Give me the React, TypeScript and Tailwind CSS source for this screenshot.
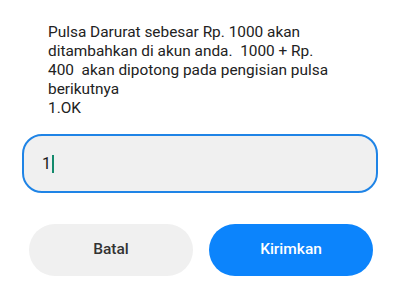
export default function App() {
    return (
        <div className="w-[400px] h-[298px] bg-white overflow-hidden" style={{ fontFamily: 'Roboto, "Noto Sans", sans-serif' }}>
            {/* Message */}
            <p className="pl-[48px] pr-2 pt-[23px] text-[15.4px] leading-[19px] text-[#222] whitespace-nowrap">
                Pulsa Darurat sebesar Rp. 1000 akan
                <br />
                ditambahkan di akun anda.&nbsp; 1000 + Rp.
                <br />
                400&nbsp; akan dipotong pada pengisian pulsa
                <br />
                berikutnya
                <br />
                1.OK
            </p>

            {/* Input */}
            <div className="mx-[22px] mt-[16px] h-[59px] rounded-[20px] border-2 border-[#1f84e6] bg-[#f0f0f0] flex items-center pl-[18px]">
                <span className="text-[16px] text-[#1a1a1a]">1</span>
                <span className="ml-[1px] w-[2px] h-[18px] bg-[#138a6c]" />
            </div>

            {/* Actions */}
            <div className="flex gap-[16px] pl-[29px] pr-[27px] mt-[31px]">
                <button className="flex-1 h-[52px] rounded-full bg-[#f0f0f0] text-[15.5px] font-medium text-[#333]">
                    Batal
                </button>
                <button className="flex-1 h-[52px] rounded-full bg-[#0c84fc] text-[15.5px] font-medium text-white">
                    Kirimkan
                </button>
            </div>
        </div>
    );
}
